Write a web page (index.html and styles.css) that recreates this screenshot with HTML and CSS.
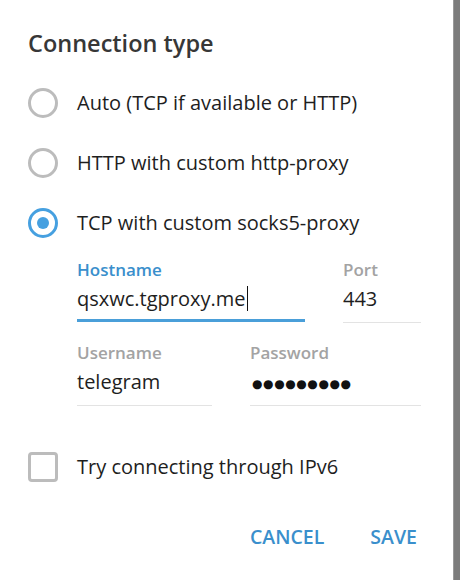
FILE: index.html
```html
<!DOCTYPE html>
<html>
<head>
<meta charset="utf-8">
<link rel="stylesheet" href="styles.css">
</head>
<body>
<div class="page">
  <div class="dialog">
    <div class="title">Connection type</div>
    <div class="options">
      <div class="option"><span class="radio"></span><span class="option-text">Auto (TCP if available or HTTP)</span></div>
      <div class="option"><span class="radio"></span><span class="option-text">HTTP with custom http-proxy</span></div>
      <div class="option"><span class="radio radio-on"><span class="radio-dot"></span></span><span class="option-text">TCP with custom socks5-proxy</span></div>
    </div>
    <div class="fields">
      <div class="field-row row-host">
        <div class="field field-focus">
          <div class="label label-focus">Hostname</div>
          <div class="value">qsxwc.tgproxy.me<span class="caret"></span></div>
        </div>
        <div class="field">
          <div class="label">Port</div>
          <div class="value">443</div>
        </div>
      </div>
      <div class="field-row row-auth">
        <div class="field">
          <div class="label">Username</div>
          <div class="value">telegram</div>
        </div>
        <div class="field">
          <div class="label">Password</div>
          <div class="value dots">●●●●●●●●●</div>
        </div>
      </div>
    </div>
    <div class="check-row"><span class="checkbox"></span><span class="option-text">Try connecting through IPv6</span></div>
    <div class="buttons">
      <span class="btn">CANCEL</span>
      <span class="btn">SAVE</span>
    </div>
  </div>
  <div class="edge"></div>
</div>
</body>
</html>
```
FILE: styles.css
```css
html, body {
  margin: 0;
  padding: 0;
  background: #ffffff;
}
body {
  font-family: "Open Sans", "Liberation Sans", sans-serif;
  color: #1e1e1e;
}
.page {
  display: flex;
  width: 460px;
  height: 580px;
}
.dialog {
  flex: 1;
  background: #ffffff;
  padding: 28px 0 0 28px;
  box-sizing: border-box;
}
.edge {
  width: 6px;
  background: #7c7c7c;
  border-left: 1px solid #9a9a9a;
}
.title {
  font-size: 23.5px;
  font-weight: 600;
  line-height: 30px;
  color: #373737;
}
.options {
  margin-top: 15px;
}
.option {
  display: flex;
  align-items: center;
  height: 60px;
}
.radio {
  width: 30px;
  height: 30px;
  box-sizing: border-box;
  border: 3px solid #bcbcbc;
  border-radius: 50%;
  display: flex;
  align-items: center;
  justify-content: center;
  flex: none;
}
.radio-on {
  border-color: #46a0e0;
}
.radio-dot {
  width: 12px;
  height: 12px;
  border-radius: 50%;
  background: #46a0e0;
}
.option-text {
  margin-left: 19px;
  font-size: 20px;
  line-height: 28px;
  color: #1e1e1e;
}
.fields {
  margin-top: 6px;
  margin-left: 49px;
}
.field-row {
  display: grid;
  column-gap: 38px;
  align-items: start;
}
.row-host {
  grid-template-columns: 228px 78px;
}
.row-auth {
  grid-template-columns: 135px 171px;
  margin-top: 19px;
}
.field {
  border-bottom: 1px solid #e3e3e3;
  padding-bottom: 9px;
}
.field-focus {
  border-bottom: 3px solid #4a9fd9;
  padding-bottom: 6px;
}
.label {
  font-size: 17px;
  font-weight: 600;
  line-height: 22px;
  color: #a3a3a3;
}
.label-focus {
  color: #3a8fcc;
}
.value {
  margin-top: 4px;
  font-size: 20px;
  line-height: 28px;
  height: 28px;
  color: #1e1e1e;
  white-space: nowrap;
}
.caret {
  display: inline-block;
  width: 0;
  height: 25px;
  border-left: 1px solid #111;
  vertical-align: -5px;
  margin-left: 1px;
}
.dots {
  font-family: "DejaVu Sans", sans-serif;
  font-size: 12px;
  line-height: 33px;
  letter-spacing: 0.6px;
  padding-left: 2px;
  color: #111;
}
.check-row {
  display: flex;
  align-items: center;
  margin-top: 46px;
  height: 30px;
}
.checkbox {
  width: 30px;
  height: 30px;
  box-sizing: border-box;
  border: 3px solid #bcbcbc;
  border-radius: 4px;
  flex: none;
}
.buttons {
  display: flex;
  justify-content: flex-end;
  gap: 46px;
  margin-top: 43px;
  padding-right: 36px;
}
.btn {
  font-size: 19.5px;
  font-weight: 600;
  line-height: 24px;
  color: #3a8fcc;
}
```
